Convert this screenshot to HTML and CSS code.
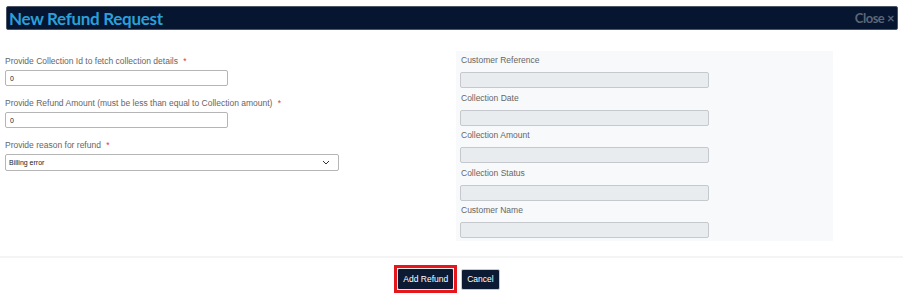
FILE: index.html
```html
<!DOCTYPE html>
<html lang="en">
<head>
  <meta charset="UTF-8">
  <meta name="viewport" content="width=device-width, initial-scale=1.0">
  <title>New Refund Request</title>

  <link rel="stylesheet" href="styles.css">
</head>

<body>
  <div class="modal-header">
    <h1>New Refund Request</h1>
    <span class="close">Close &times;</span>
  </div>

  <div class="modal-body">
    <form class="refund-form">
      <div class="field">
        <label>Provide Collection Id to fetch collection details <span class="req">*</span></label>
        <input type="text" class="short" value="0">
      </div>
      <div class="field">
        <label>Provide Refund Amount (must be less than equal to Collection amount) <span class="req">*</span></label>
        <input type="text" class="short" value="0">
      </div>
      <div class="field">
        <label>Provide reason for refund <span class="req">*</span></label>
        <div class="select">
          <span>Billing error</span>
          <svg width="8" height="5" viewBox="0 0 8 5"><path d="M1 1l3 3 3-3" fill="none" stroke="#333" stroke-width="1"/></svg>
        </div>
      </div>
    </form>

    <div class="details">
      <label>Customer Reference</label>
      <input type="text" disabled>
      <label>Collection Date</label>
      <input type="text" disabled>
      <label>Collection Amount</label>
      <input type="text" disabled>
      <label>Collection Status</label>
      <input type="text" disabled>
      <label>Customer Name</label>
      <input type="text" disabled>
    </div>
  </div>

  <div class="modal-footer">
    <span class="highlight"><button class="btn">Add Refund</button></span>
    <button class="btn cancel">Cancel</button>
  </div>
</body>
</html>
```

FILE: styles.css
```css
body {
  font-family: "Liberation Sans", Arial, sans-serif;
  background: #fff;
  margin: 0;
  padding: 0;
  color: #666;
}

.modal-header {
  display: flex;
  justify-content: space-between;
  align-items: center;
  height: 22px;
  margin: 6px 5px 0 6px;
  padding: 0 3px 0 2px;
  background: #061530;
  border: 1px solid #4a5568;
  border-radius: 2px;
}

.modal-header h1 {
  margin: 0;
  font-family: Lato, sans-serif;
  font-size: 17px;
  font-weight: 700;
  color: #2b9fd9;
  letter-spacing: -0.3px;
}

.close {
  font-family: Lato, sans-serif;
  font-size: 13px;
  font-weight: 700;
  color: #5c6677;
  letter-spacing: -0.5px;
}

.modal-body {
  display: flex;
  margin-top: 21px;
  padding-bottom: 15px;
  border-bottom: 2px solid #f4f4f4;
}

.refund-form {
  width: 446px;
  padding: 5px 0 0 5px;
}

.field {
  margin-bottom: 12px;
}

.field label,
.details label {
  display: block;
  font-size: 8.5px;
  line-height: 11px;
  color: #666;
}

.req {
  color: #e03a3a;
  margin-left: 3px;
}

.field input {
  display: block;
  margin-top: 3px;
  height: 16px;
  box-sizing: border-box;
  border: 1px solid #b5b5b5;
  border-radius: 2px;
  padding: 0 4px;
  font-family: inherit;
  font-size: 7px;
  color: #222;
}

.short {
  width: 223px;
}

.select {
  display: flex;
  justify-content: space-between;
  align-items: center;
  margin-top: 3px;
  width: 334px;
  height: 17px;
  box-sizing: border-box;
  border: 1px solid #b5b5b5;
  border-radius: 2px;
  padding: 0 8px 0 3px;
  font-size: 7px;
  color: #222;
}

.details {
  width: 369px;
  padding: 4px 4px 3px 4px;
  margin-left: 5px;
  background: #f8f9fb;
}

.details label {
  margin: 0 0 6px 1px;
}

.details input {
  display: block;
  width: 249px;
  height: 16px;
  box-sizing: border-box;
  margin: 0 0 4.5px 0;
  background: #e9ecef;
  border: 1px solid #c5c9ce;
  border-radius: 2px;
}

.details input:last-child {
  margin-bottom: 0;
}

.modal-footer {
  display: flex;
  justify-content: center;
  align-items: center;
  gap: 4px;
  padding: 7px 0 0 0;
}

.highlight {
  display: inline-block;
  border: 3px solid #e5171c;
}

.btn {
  display: block;
  height: 22px;
  padding: 0 5px;
  font-family: inherit;
  font-size: 8.5px;
  color: #fff;
  background: #0d1a33;
  border: 1px solid #c9cbd0;
  border-radius: 2px;
}

.highlight .btn {
  border-color: #e8e8e8;
}

.cancel {
  height: 21px;
  margin-right: 9px;
}
```
